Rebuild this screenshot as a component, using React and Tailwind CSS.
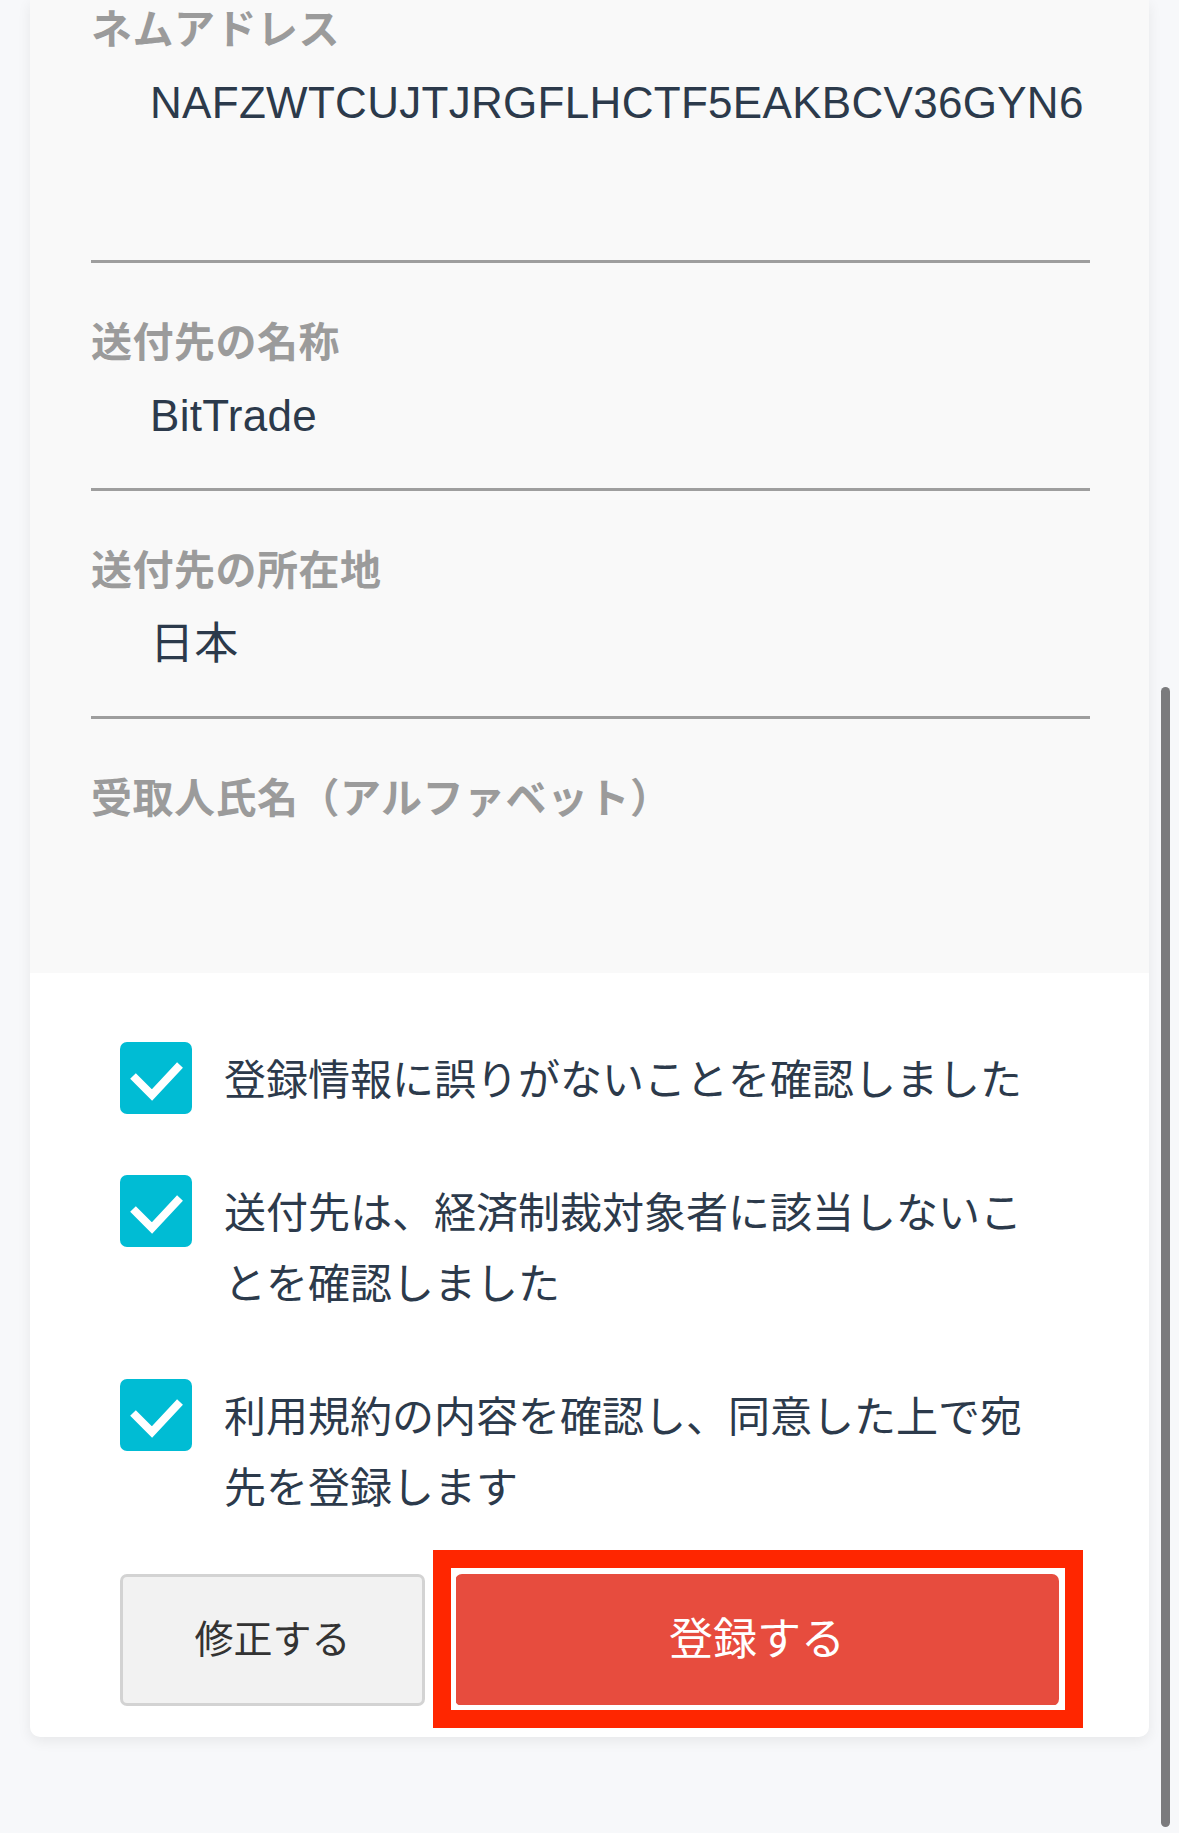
import React from 'react';

const FONT = '"Liberation Sans", "Noto Sans CJK JP", sans-serif';

// one read-only field in the grey block
const Field = ({ label, value, first, tall }) => (
  <div
    className={`border-b-[3px] border-[#9e9e9e] ${first ? 'pt-0' : 'pt-[50px]'} ${tall ? 'pb-[127px]' : 'pb-[42px]'}`}
  >
    <div className="h-[60px] text-[41px] leading-[60px] tracking-[0.5px] font-bold text-[#9b9b9b] whitespace-nowrap">
      {label}
    </div>
    <div className="mt-[13px] h-[60px] pl-[59px] text-[44px] leading-[60px] tracking-[0.3px] text-[#2c3a4b] whitespace-nowrap">
      {value}
    </div>
  </div>
);

const Check = () => (
  <div className="w-[72px] h-[72px] shrink-0 rounded-[7px] bg-[#00bcd4] flex items-center justify-center">
    <svg width="72" height="72" viewBox="0 0 72 72">
      <path d="M13 34 L32 53 L60 23" fill="none" stroke="#fff" strokeWidth="8" />
    </svg>
  </div>
);

const CheckRow = ({ children }) => (
  <div className="flex items-start gap-[32px]">
    <Check />
    <p className="flex-1 mt-[3px] text-[42px] leading-[71px] text-[#2c3a4b]">{children}</p>
  </div>
);

export default function App() {
  return (
    <div className="relative w-[1179px] h-[1833px] overflow-hidden bg-[#f7f8fa]" style={{ fontFamily: FONT }}>
      {/* card */}
      <div className="ml-[30px] w-[1119px] rounded-b-[10px] bg-white shadow-[0_4px_14px_rgba(0,0,0,0.07)]">
        <div className="bg-[#f9f9f9] pl-[61px] pr-[59px] pb-[144px]">
          <Field first tall label="ネムアドレス" value="NAFZWTCUJTJRGFLHCTF5EAKBCV36GYN6" />
          <Field label="送付先の名称" value="BitTrade" />
          <Field label="送付先の所在地" value="日本" />
          <div className="pt-[50px] h-[110px] text-[41px] leading-[60px] tracking-[0.5px] font-bold text-[#9b9b9b] whitespace-nowrap">
            受取人氏名（アルファベット）
          </div>
        </div>

        <div className="px-[90px] pt-[69px] pb-[31px]">
          <div className="flex flex-col gap-[59px]">
            <CheckRow>登録情報に誤りがないことを確認しました</CheckRow>
            <CheckRow>送付先は、経済制裁対象者に該当しないことを確認しました</CheckRow>
            <CheckRow>利用規約の内容を確認し、同意した上で宛先を登録します</CheckRow>
          </div>

          <div className="mt-[50px] flex gap-[30px]">
            <button className="w-[305px] h-[132px] rounded-[7px] border-[3px] border-[#d3d3d3] bg-[#f2f2f2] text-[39px] text-[#333]">
              修正する
            </button>
            <div className="relative flex-1">
              <button className="w-full h-[132px] rounded-[7px] bg-[#e74c3e] text-[44px] text-white">
                登録する
              </button>
              {/* highlight frame drawn over the button */}
              <div className="absolute -left-[22px] -right-[24px] -top-[24px] -bottom-[22px] border-[18px] border-[#ff2600] shadow-[inset_0_0_0_5px_#fff] pointer-events-none" />
            </div>
          </div>
        </div>
      </div>

      {/* scroll indicator */}
      <div className="absolute left-[1161px] top-[687px] w-[9px] h-[1140px] rounded-full bg-[#7b7b7d]" />
    </div>
  );
}
